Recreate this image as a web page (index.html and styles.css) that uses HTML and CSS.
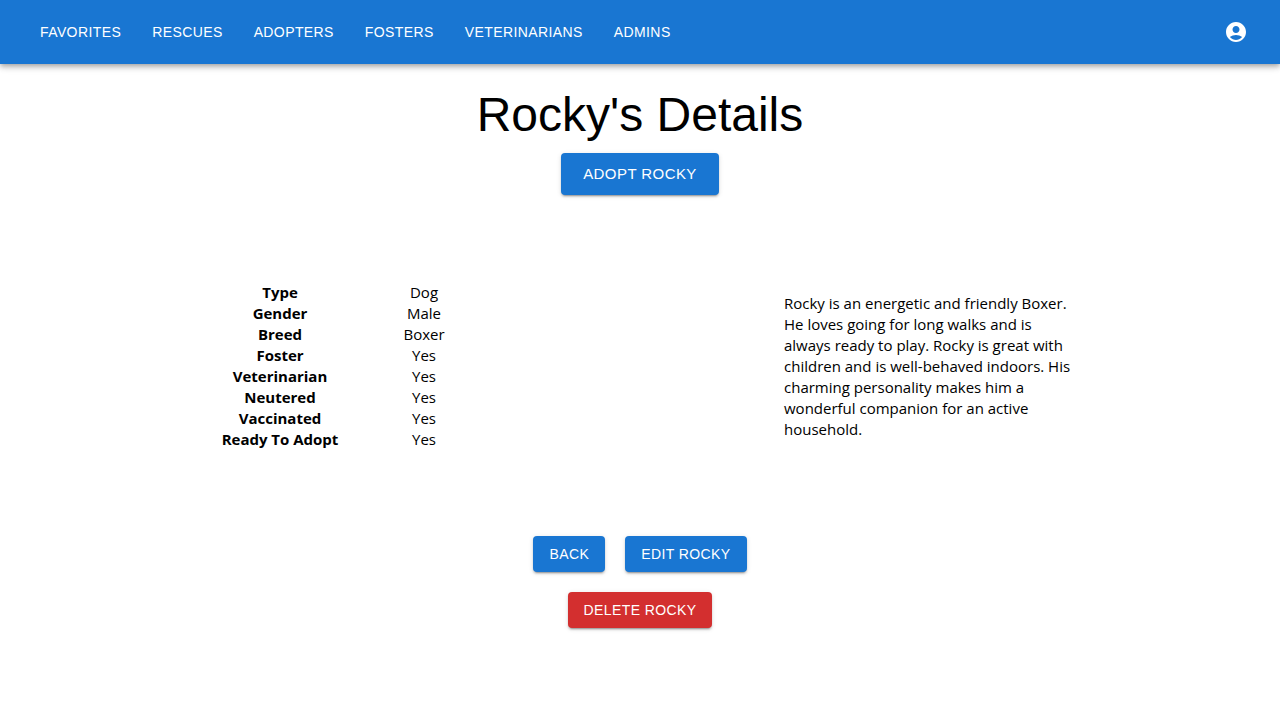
FILE: index.html
```html
<!DOCTYPE html>
<html lang="en">
<head>
<meta charset="utf-8">
<meta name="viewport" content="width=device-width, initial-scale=1">
<title>Rocky's Details</title>
<link rel="stylesheet" href="styles.css">
</head>
<body>
<header class="app-bar">
  <nav class="nav">
    <a class="nav-link" href="#">Favorites</a>
    <a class="nav-link" href="#">Rescues</a>
    <a class="nav-link" href="#">Adopters</a>
    <a class="nav-link" href="#">Fosters</a>
    <a class="nav-link" href="#">Veterinarians</a>
    <a class="nav-link" href="#">Admins</a>
  </nav>
  <button class="account" type="button" aria-label="Account">
    <svg viewBox="0 0 24 24" width="24" height="24" fill="currentColor" aria-hidden="true"><path d="M12 2C6.480 2 2 6.480 2 12s4.480 10 10 10 10-4.480 10-10S17.520 2 12 2zm0 4c1.930 0 3.500 1.570 3.500 3.500S13.930 13 12 13s-3.500-1.570-3.500-3.500S10.070 6 12 6zm0 14c-2.030 0-4.430-.82-6.140-2.880C7.550 15.800 9.680 15 12 15s4.450.8 6.140 2.120C16.430 19.180 14.030 20 12 20z"/></svg>
  </button>
</header>
<main class="page">
  <h1 class="title">Rocky's Details</h1>
  <button class="btn btn-large" type="button">Adopt Rocky</button>
  <section class="details">
    <table class="facts">
      <tbody>
        <tr><th scope="row">Type</th><td>Dog</td></tr>
        <tr><th scope="row">Gender</th><td>Male</td></tr>
        <tr><th scope="row">Breed</th><td>Boxer</td></tr>
        <tr><th scope="row">Foster</th><td>Yes</td></tr>
        <tr><th scope="row">Veterinarian</th><td>Yes</td></tr>
        <tr><th scope="row">Neutered</th><td>Yes</td></tr>
        <tr><th scope="row">Vaccinated</th><td>Yes</td></tr>
        <tr><th scope="row">Ready To Adopt</th><td>Yes</td></tr>
      </tbody>
    </table>
    <p class="about">Rocky is an energetic and friendly Boxer. He loves going for long walks and is always ready to play. Rocky is great with children and is well-behaved indoors. His charming personality makes him a wonderful companion for an active household.</p>
  </section>
  <div class="actions">
    <button class="btn" type="button">Back</button>
    <button class="btn" type="button">Edit Rocky</button>
  </div>
  <button class="btn btn-danger" type="button">Delete Rocky</button>
</main>
</body>
</html>
```
FILE: styles.css
```css
* { box-sizing: border-box; }

body {
  margin: 0;
  background: #fff;
  color: #000;
  font: 15px/21px "Segoe UI", "Open Sans", "Noto Sans", sans-serif;
}

.app-bar {
  display: flex;
  align-items: center;
  justify-content: space-between;
  min-height: 64px;
  padding: 0 24px 0 40px;
  background: #1976d2;
  color: #fff;
  box-shadow: 0 2px 4px -1px rgba(0, 0, 0, .2), 0 4px 5px 0 rgba(0, 0, 0, .14), 0 1px 10px 0 rgba(0, 0, 0, .12);
}

.nav {
  display: flex;
  flex-wrap: wrap;
  column-gap: 31px;
}

.nav-link,
.btn {
  font: 14px/24px "Liberation Sans", Arial, sans-serif;
  letter-spacing: 0.02857em;
  text-transform: uppercase;
  text-decoration: none;
  color: #fff;
}

.nav-link { padding: 6px 0; }

.account {
  display: flex;
  padding: 8px;
  border: 0;
  border-radius: 50%;
  background: none;
  color: inherit;
}

.page {
  display: flex;
  flex-direction: column;
  align-items: center;
  padding: 23px 24px 24px;
}

.title {
  margin: 0 0 10px;
  font: 400 48px/56px "Liberation Sans", Arial, sans-serif;
}

.btn {
  padding: 6px 16px;
  border: 0;
  border-radius: 4px;
  background: #1976d2;
  box-shadow: 0 3px 1px -2px rgba(0, 0, 0, .2), 0 2px 2px 0 rgba(0, 0, 0, .14), 0 1px 5px 0 rgba(0, 0, 0, .12);
}

.btn-large {
  padding: 8px 22px;
  font-size: 15px;
  line-height: 26px;
}

.btn-danger { background: #d32f2f; }

.details {
  display: grid;
  grid-template-columns: repeat(3, 1fr);
  align-items: center;
  width: 100%;
  max-width: 864px;
  margin: 87px 0 86px;
}

.facts {
  width: 100%;
  border-collapse: collapse;
  table-layout: fixed;
  text-align: center;
}

.facts th,
.facts td { padding: 0; }

.about {
  grid-column: 3;
  margin: 0;
}

.actions {
  display: flex;
  gap: 20px;
  margin-bottom: 20px;
}
```
